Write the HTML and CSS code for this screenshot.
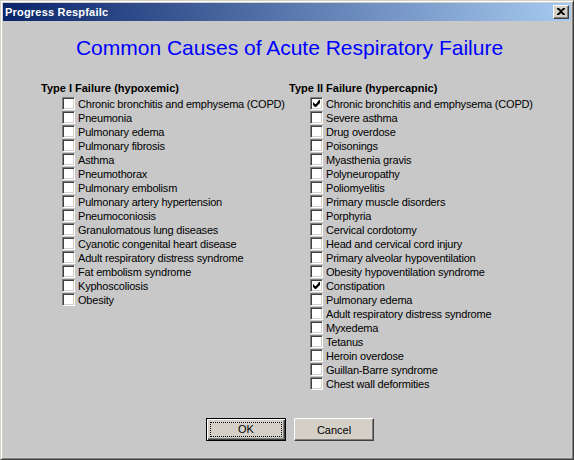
FILE: index.html
```html
<!DOCTYPE html>
<html lang="en">
<head>
  <meta charset="UTF-8" />
  <title>Progress Respfailc</title>
  <link rel="stylesheet" href="styles.css">
</head>
<body>
  <div class="window">
    <!-- title bar -->
    <div class="titlebar">
      <span class="title">Progress Respfailc</span>
      <span class="close">
        <svg width="8" height="7" viewBox="0 0 8 7"><path d="M0 0h2l2 2 2-2h2v1L5 3.5 8 6v1H6L4 5 2 7H0V6l3-2.5L0 1z" fill="#000"/></svg>
      </span>
    </div>

    <div class="content">
      <h1 class="heading">Common Causes of Acute Respiratory Failure</h1>

      <div class="columns">
        <div class="column">
          <div class="col-title">Type I Failure (hypoxemic)</div>
          <ul class="list">
            <li><span class="box"></span>Chronic bronchitis and emphysema (COPD)</li>
            <li><span class="box"></span>Pneumonia</li>
            <li><span class="box"></span>Pulmonary edema</li>
            <li><span class="box"></span>Pulmonary fibrosis</li>
            <li><span class="box"></span>Asthma</li>
            <li><span class="box"></span>Pneumothorax</li>
            <li><span class="box"></span>Pulmonary embolism</li>
            <li><span class="box"></span>Pulmonary artery hypertension</li>
            <li><span class="box"></span>Pneumoconiosis</li>
            <li><span class="box"></span>Granulomatous lung diseases</li>
            <li><span class="box"></span>Cyanotic congenital heart disease</li>
            <li><span class="box"></span>Adult respiratory distress syndrome</li>
            <li><span class="box"></span>Fat embolism syndrome</li>
            <li><span class="box"></span>Kyphoscoliosis</li>
            <li><span class="box"></span>Obesity</li>
          </ul>
        </div>

        <div class="column">
          <div class="col-title">Type II Failure (hypercapnic)</div>
          <ul class="list">
            <li><span class="box"><svg width="7" height="7" viewBox="0 0 7 7"><path d="M6 0h1v3L3 7H2L0 5V2l2 2h1z" fill="#000"/></svg></span>Chronic bronchitis and emphysema (COPD)</li>
            <li><span class="box"></span>Severe asthma</li>
            <li><span class="box"></span>Drug overdose</li>
            <li><span class="box"></span>Poisonings</li>
            <li><span class="box"></span>Myasthenia gravis</li>
            <li><span class="box"></span>Polyneuropathy</li>
            <li><span class="box"></span>Poliomyelitis</li>
            <li><span class="box"></span>Primary muscle disorders</li>
            <li><span class="box"></span>Porphyria</li>
            <li><span class="box"></span>Cervical cordotomy</li>
            <li><span class="box"></span>Head and cervical cord injury</li>
            <li><span class="box"></span>Primary alveolar hypoventilation</li>
            <li><span class="box"></span>Obesity hypoventilation syndrome</li>
            <li><span class="box"><svg width="7" height="7" viewBox="0 0 7 7"><path d="M6 0h1v3L3 7H2L0 5V2l2 2h1z" fill="#000"/></svg></span>Constipation</li>
            <li><span class="box"></span>Pulmonary edema</li>
            <li><span class="box"></span>Adult respiratory distress syndrome</li>
            <li><span class="box"></span>Myxedema</li>
            <li><span class="box"></span>Tetanus</li>
            <li><span class="box"></span>Heroin overdose</li>
            <li><span class="box"></span>Guillan-Barre syndrome</li>
            <li><span class="box"></span>Chest wall deformities</li>
          </ul>
        </div>
      </div>

      <div class="buttons">
        <button class="btn default"><span class="focus">OK</span></button>
        <button class="btn">Cancel</button>
      </div>
    </div>
  </div>
</body>
</html>
```

FILE: styles.css
```css
body {
  margin: 0;
  font-family: "Liberation Sans", Arial, sans-serif;
  font-size: 11px;
  color: #000;
}

.window {
  width: 574px;
  height: 460px;
  box-sizing: border-box;
  display: flex;
  flex-direction: column;
  background: #d4d0c8;
  border: 1px solid;
  border-color: #d4d0c8 #404040 #404040 #d4d0c8;
  box-shadow: inset 1px 1px #fff, inset -1px -1px #808080;
  padding: 2px;
}

.titlebar {
  height: 18px;
  display: flex;
  align-items: center;
  justify-content: space-between;
  background: linear-gradient(to right, #0a246a, #a6caf0);
  padding: 0 2px;
}
.title {
  color: #fff;
  font-weight: bold;
  letter-spacing: 0.2px;
  line-height: 18px;
}
.close {
  width: 16px;
  height: 14px;
  box-sizing: border-box;
  display: flex;
  align-items: center;
  justify-content: center;
  background: #d4d0c8;
  border: 1px solid;
  border-color: #fff #404040 #404040 #fff;
  box-shadow: inset -1px -1px #808080;
  padding: 0 1px 1px 0;
}

.content {
  flex: 1;
  background: #c8c8c8;
}

.heading {
  margin: 15px 0 0;
  padding-left: 5px;
  font-weight: normal;
  font-size: 21px;
  line-height: 24px;
  color: #0000ff;
  text-align: center;
}

.columns {
  display: flex;
  margin-top: 21px;
  padding-left: 38px;
}
.column { width: 248px; }
.col-title {
  font-weight: bold;
  line-height: 14px;
  margin-bottom: 2px;
}
.list {
  list-style: none;
  margin: 0;
  padding: 0 0 0 21px;
}
.list li {
  display: flex;
  gap: 3px;
  height: 14px;
  line-height: 14px;
  letter-spacing: -0.2px;
  white-space: nowrap;
}
.box {
  width: 13px;
  height: 13px;
  flex: none;
  box-sizing: border-box;
  display: flex;
  align-items: center;
  justify-content: center;
  background: #fff;
  border: 1px solid;
  border-color: #808080 #fff #fff #808080;
  box-shadow: inset 1px 1px #404040, inset -1px -1px #d4d0c8;
}

.buttons {
  display: flex;
  justify-content: center;
  gap: 8px;
  margin-top: 27px;
  padding-left: 6px;
}
.btn {
  width: 80px;
  height: 23px;
  box-sizing: border-box;
  margin: 0;
  padding: 0;
  font: inherit;
  color: #000;
  background: #d4d0c8;
  border: 1px solid;
  border-color: #fff #404040 #404040 #fff;
  box-shadow: inset -1px -1px #808080;
}
.btn.default {
  border: 1px solid #000;
  box-shadow: inset 1px 1px #fff, inset -1px -1px #404040, inset -2px -2px #808080;
  padding: 3px;
}
.focus {
  display: block;
  height: 100%;
  box-sizing: border-box;
  border: 1px dotted #000;
  line-height: 13px;
}
```
